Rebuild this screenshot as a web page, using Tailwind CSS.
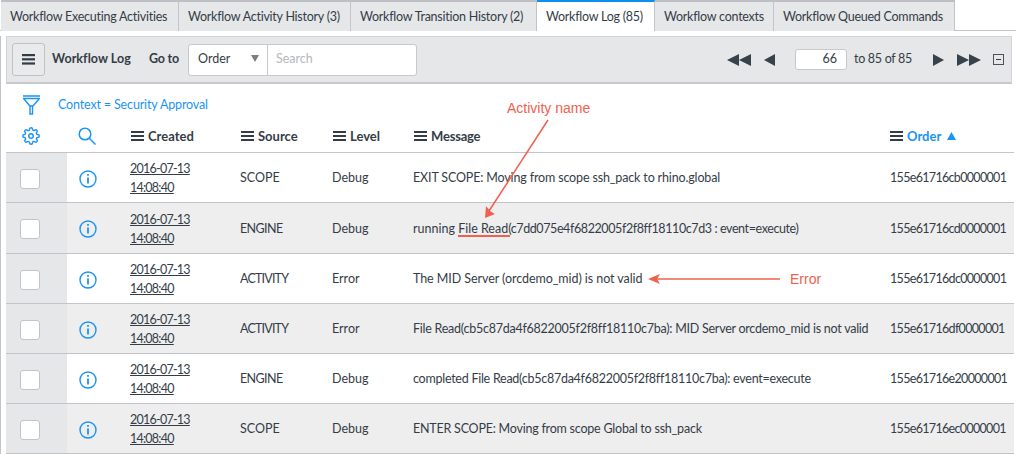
<!DOCTYPE html>
<html lang="en">
<head>
  <meta charset="UTF-8" />
  <title>Workflow Log</title>
  <script src="https://cdn.jsdelivr.net/npm/@tailwindcss/browser@4"></script>
</head>
<body class="bg-white text-[#343d47] font-['Lato',sans-serif] text-[12.5px] w-[1016px] h-[455px] overflow-hidden relative">

  <!-- Tabs -->
  <div class="flex h-[31px] border-b border-[#c2c4c9] pl-px tracking-[-0.25px]">
    <div class="h-[31px] pt-px px-[9px] w-[178px] flex items-center bg-[#e6e7e9] border-t-2 border-t-[#bdbfc4] border-r border-[#c2c4c9] whitespace-nowrap">Workflow Executing Activities</div>
    <div class="h-[31px] pt-px w-[172px] px-[9px] flex items-center bg-[#e6e7e9] border-t-2 border-t-[#bdbfc4] border-r border-[#c2c4c9] whitespace-nowrap">Workflow Activity History (3)</div>
    <div class="h-[31px] pt-px w-[186px] px-[9px] flex items-center bg-[#e6e7e9] border-t-2 border-t-[#bdbfc4] border-r border-[#c2c4c9] whitespace-nowrap">Workflow Transition History (2)</div>
    <div class="h-[31px] pt-px w-[118px] px-[9px] flex items-center bg-white border-t-2 border-t-[#0c8ff0] border-r border-[#c2c4c9] whitespace-nowrap">Workflow Log (85)</div>
    <div class="h-[31px] pt-px w-[119px] px-[9px] flex items-center bg-[#e6e7e9] border-t-2 border-t-[#bdbfc4] border-r border-[#c2c4c9] whitespace-nowrap">Workflow contexts</div>
    <div class="h-[31px] pt-px w-[181px] px-[9px] flex items-center bg-[#e6e7e9] border-t-2 border-t-[#bdbfc4] border-r border-[#c2c4c9] whitespace-nowrap">Workflow Queued Commands</div>
  </div>

  <div class="pl-[6px] pr-[4px] border-l border-[#c2c4c9]">
    <!-- Toolbar -->
    <div class="mt-[5px] h-[48px] -ml-px w-[1006px] flex items-center bg-[#e6e7e9] border border-[#d3d4d8] border-b-2 border-b-[#c8c9cd] pl-[5px] pr-[7px]">
      <button class="w-[33px] h-[33px] flex items-center justify-center bg-[#e9eaec] border border-[#bfc1c5] rounded-[3px]">
        <svg width="13" height="11" viewBox="0 0 13 11" fill="#343d47"><rect width="13" height="2.2"/><rect y="4.2" width="13" height="2.2"/><rect y="8.4" width="13" height="2.2"/></svg>
      </button>
      <span class="ml-[7px] font-bold w-[97px] tracking-[0.05px] whitespace-nowrap">Workflow Log</span>
      <span class="font-bold w-[39px] tracking-[-0.2px]">Go to</span>
      <div class="flex h-[32px] w-[229px] bg-white border border-[#c8c9cd] rounded-[3px]">
        <div class="w-[79px] flex items-center justify-between border-r border-[#c8c9cd] pl-[9px] pr-[8px]">
          <span>Order</span>
          <span class="w-0 h-0 border-x-[4px] border-x-transparent border-t-[7px] border-t-[#7a7f86] mb-[3px]"></span>
        </div>
        <div class="flex items-center pl-[8px] text-[#b4b7bb]">Search</div>
      </div>
      <div class="ml-auto flex items-center">
        <svg width="24" height="12" viewBox="0 0 24 12" fill="#38424d"><path d="M12 0v12L0 6zM24 0v12L12 6z"/></svg>
        <svg class="ml-[13px]" width="11" height="12" viewBox="0 0 11 12" fill="#38424d"><path d="M11 0v12L0 6z"/></svg>
        <div class="ml-[20px] w-[52px] h-[21px] bg-white border border-[#c8c9cd] rounded-[3px] flex items-center justify-end pr-[9px]">66</div>
        <span class="ml-[7px] w-[67px] tracking-[-0.3px] whitespace-nowrap">to 85 of 85</span>
        <svg class="ml-[12px]" width="11" height="12" viewBox="0 0 11 12" fill="#38424d"><path d="M0 0v12l11-6z"/></svg>
        <svg class="ml-[13px]" width="24" height="12" viewBox="0 0 24 12" fill="#38424d"><path d="M0 0v12l12-6zM12 0v12l12-6z"/></svg>
        <span class="ml-[12px] w-[11px] h-[11px] border border-[#4a525b] flex items-center justify-center"><span class="w-[5px] h-px bg-[#343d47]"></span></span>
      </div>
    </div>

    <!-- Filter breadcrumb -->
    <div class="h-[37px] pt-[5px] flex items-center text-[#1a94f5] -ml-px">
      <svg class="ml-[16px]" width="19" height="21" viewBox="0 0 19 21" fill="none" stroke="#1a94f5" stroke-width="1.4"><path d="M1 1h17M1 3.5h17M2 4l6 7h3l6-7M8 11v8h2.5v-8"/></svg>
      <span class="ml-[17px] tracking-[-0.15px]">Context = Security Approval</span>
    </div>

    <!-- Log table -->
    <table class="table-fixed -ml-px w-[1008px] border-collapse">
      <colgroup>
        <col class="w-[61px]" /><col class="w-[63px]" /><col class="w-[110px]" /><col class="w-[92px]" /><col class="w-[81px]" /><col class="w-[477px]" /><col class="w-[124px]" />
      </colgroup>
      <thead>
        <tr class="h-[31px] text-[13px] text-left border-b border-[#c2c4c9]">
          <th>
            <svg class="ml-[16px]" width="18" height="18" viewBox="0 0 24 24" fill="none" stroke="#1a94f5" stroke-width="1.900"><circle cx="12" cy="12" r="3"/><path d="M19.4 15a1.65 1.65 0 0 0 .33 1.82l.06.06a2 2 0 0 1 0 2.83 2 2 0 0 1-2.83 0l-.06-.06a1.65 1.65 0 0 0-1.82-.33 1.65 1.65 0 0 0-1 1.51V21a2 2 0 0 1-2 2 2 2 0 0 1-2-2v-.09A1.65 1.65 0 0 0 9 19.4a1.65 1.65 0 0 0-1.82.33l-.06.06a2 2 0 0 1-2.83 0 2 2 0 0 1 0-2.83l.06-.06a1.65 1.65 0 0 0 .33-1.82 1.65 1.65 0 0 0-1.51-1H3a2 2 0 0 1-2-2 2 2 0 0 1 2-2h.09A1.65 1.65 0 0 0 4.6 9a1.65 1.65 0 0 0-.33-1.82l-.06-.06a2 2 0 0 1 0-2.83 2 2 0 0 1 2.83 0l.06.06a1.65 1.65 0 0 0 1.82.33H9a1.65 1.65 0 0 0 1-1.51V3a2 2 0 0 1 2-2 2 2 0 0 1 2 2v.09a1.65 1.65 0 0 0 1 1.51 1.65 1.65 0 0 0 1.82-.33l.06-.06a2 2 0 0 1 2.83 0 2 2 0 0 1 0 2.83l-.06.06a1.65 1.65 0 0 0-.33 1.82V9a1.65 1.65 0 0 0 1.51 1H21a2 2 0 0 1 2 2 2 2 0 0 1-2 2h-.09a1.65 1.65 0 0 0-1.51 1z"/></svg>
          </th>
          <th>
            <svg class="ml-[11px]" width="18" height="18" viewBox="0 0 18 18" fill="none" stroke="#1a94f5" stroke-width="1.5"><circle cx="7" cy="7" r="5.800"/><path d="M11.300 11.300L17.500 17.500"/></svg>
          </th>
          <th><span class="flex items-center gap-[4px] pl-px font-bold"><svg width="13" height="10" viewBox="0 0 13 10" fill="#343d47"><rect width="13" height="2"/><rect y="4" width="13" height="2"/><rect y="8" width="13" height="2"/></svg>Created</span></th>
          <th><span class="flex items-center gap-[4px] pl-px font-bold"><svg width="13" height="10" viewBox="0 0 13 10" fill="#343d47"><rect width="13" height="2"/><rect y="4" width="13" height="2"/><rect y="8" width="13" height="2"/></svg>Source</span></th>
          <th><span class="flex items-center gap-[4px] pl-px font-bold"><svg width="13" height="10" viewBox="0 0 13 10" fill="#343d47"><rect width="13" height="2"/><rect y="4" width="13" height="2"/><rect y="8" width="13" height="2"/></svg>Level</span></th>
          <th><span class="flex items-center gap-[4px] pl-px font-bold tracking-[-0.2px]"><svg width="13" height="10" viewBox="0 0 13 10" fill="#343d47"><rect width="13" height="2"/><rect y="4" width="13" height="2"/><rect y="8" width="13" height="2"/></svg>Message</span></th>
          <th><span class="flex items-center gap-[4px] font-bold text-[#1a94f5]"><svg width="13" height="10" viewBox="0 0 13 10" fill="#343d47"><rect width="13" height="2"/><rect y="4" width="13" height="2"/><rect y="8" width="13" height="2"/></svg>Order<svg class="ml-[2px]" width="9" height="8" viewBox="0 0 9 8" fill="#1a94f5"><path d="M4.500 0L9 8H0z"/></svg></span></th>
        </tr>
      </thead>
      <tbody class="[&_td]:pt-[3px]">
        <tr class="h-[50px] border-b border-[#c2c4c9] bg-white">
          <td class="bg-[#e6e7e9]"><span class="ml-[14px] block w-[20px] h-[20px] bg-white border border-[#c2c4c9] rounded-[3px]"></span></td>
          <td><svg class="ml-[12px]" width="18" height="18" viewBox="0 0 18 18" fill="none" stroke="#1a94f5" stroke-width="1.400"><circle cx="9" cy="9" r="8"/><path d="M9 7.500v6" stroke-width="1.800"/><path d="M9 4v1.800" stroke-width="1.800"/></svg></td>
          <td class="leading-[19px] !pt-[2px] tracking-[-0.75px]"><span class="underline">2016-07-13<br />14:08:40</span></td>
          <td>SCOPE</td><td>Debug</td>
          <td class="whitespace-nowrap tracking-[-0.15px]">EXIT SCOPE: Moving from scope ssh_pack to rhino.global</td>
          <td class="tracking-[-0.67px]">155e61716cb0000001</td>
        </tr>
        <tr class="h-[51px] border-b border-[#c2c4c9] bg-[#eeeeef]">
          <td class="bg-[#e6e7e9]"><span class="ml-[14px] block w-[20px] h-[20px] bg-white border border-[#c2c4c9] rounded-[3px]"></span></td>
          <td><svg class="ml-[12px]" width="18" height="18" viewBox="0 0 18 18" fill="none" stroke="#1a94f5" stroke-width="1.400"><circle cx="9" cy="9" r="8"/><path d="M9 7.500v6" stroke-width="1.800"/><path d="M9 4v1.800" stroke-width="1.800"/></svg></td>
          <td class="leading-[19px] !pt-[2px] tracking-[-0.75px]"><span class="underline">2016-07-13<br />14:08:40</span></td>
          <td class="tracking-[-0.6px]">ENGINE</td><td>Debug</td>
          <td class="whitespace-nowrap tracking-[-0.4px]"><span class="tracking-[0px]">running File Read</span>(c7dd075e4f6822005f2f8ff18110c7d3 : event=execute)</td>
          <td class="tracking-[-0.67px]">155e61716cd0000001</td>
        </tr>
        <tr class="h-[50px] border-b border-[#c2c4c9] bg-white">
          <td class="bg-[#e6e7e9]"><span class="ml-[14px] block w-[20px] h-[20px] bg-white border border-[#c2c4c9] rounded-[3px]"></span></td>
          <td><svg class="ml-[12px]" width="18" height="18" viewBox="0 0 18 18" fill="none" stroke="#1a94f5" stroke-width="1.400"><circle cx="9" cy="9" r="8"/><path d="M9 7.500v6" stroke-width="1.800"/><path d="M9 4v1.800" stroke-width="1.800"/></svg></td>
          <td class="leading-[19px] !pt-[2px] tracking-[-0.75px]"><span class="underline">2016-07-13<br />14:08:40</span></td>
          <td class="tracking-[-0.8px]">ACTIVITY</td><td>Error</td>
          <td class="whitespace-nowrap tracking-[-0.07px]">The MID Server (orcdemo_mid) is not valid</td>
          <td class="tracking-[-0.67px]">155e61716dc0000001</td>
        </tr>
        <tr class="h-[50px] border-b border-[#c2c4c9] bg-[#eeeeef]">
          <td class="bg-[#e6e7e9]"><span class="ml-[14px] block w-[20px] h-[20px] bg-white border border-[#c2c4c9] rounded-[3px]"></span></td>
          <td><svg class="ml-[12px]" width="18" height="18" viewBox="0 0 18 18" fill="none" stroke="#1a94f5" stroke-width="1.400"><circle cx="9" cy="9" r="8"/><path d="M9 7.500v6" stroke-width="1.800"/><path d="M9 4v1.800" stroke-width="1.800"/></svg></td>
          <td class="leading-[19px] !pt-[2px] tracking-[-0.75px]"><span class="underline">2016-07-13<br />14:08:40</span></td>
          <td class="tracking-[-0.8px]">ACTIVITY</td><td>Error</td>
          <td class="whitespace-nowrap tracking-[-0.25px]">File Read(cb5c87da4f6822005f2f8ff18110c7ba): MID Server orcdemo_mid is not valid</td>
          <td class="tracking-[-0.67px]">155e61716df0000001</td>
        </tr>
        <tr class="h-[50px] border-b border-[#c2c4c9] bg-white">
          <td class="bg-[#e6e7e9]"><span class="ml-[14px] block w-[20px] h-[20px] bg-white border border-[#c2c4c9] rounded-[3px]"></span></td>
          <td><svg class="ml-[12px]" width="18" height="18" viewBox="0 0 18 18" fill="none" stroke="#1a94f5" stroke-width="1.400"><circle cx="9" cy="9" r="8"/><path d="M9 7.500v6" stroke-width="1.800"/><path d="M9 4v1.800" stroke-width="1.800"/></svg></td>
          <td class="leading-[19px] !pt-[2px] tracking-[-0.75px]"><span class="underline">2016-07-13<br />14:08:40</span></td>
          <td class="tracking-[-0.6px]">ENGINE</td><td>Debug</td>
          <td class="whitespace-nowrap tracking-[-0.26px]">completed File Read(cb5c87da4f6822005f2f8ff18110c7ba): event=execute</td>
          <td class="tracking-[-0.67px]">155e61716e20000001</td>
        </tr>
        <tr class="h-[50px] border-b border-[#c2c4c9] bg-[#eeeeef]">
          <td class="bg-[#e6e7e9]"><span class="ml-[14px] block w-[20px] h-[20px] bg-white border border-[#c2c4c9] rounded-[3px]"></span></td>
          <td><svg class="ml-[12px]" width="18" height="18" viewBox="0 0 18 18" fill="none" stroke="#1a94f5" stroke-width="1.400"><circle cx="9" cy="9" r="8"/><path d="M9 7.500v6" stroke-width="1.800"/><path d="M9 4v1.800" stroke-width="1.800"/></svg></td>
          <td class="leading-[19px] !pt-[2px] tracking-[-0.75px]"><span class="underline">2016-07-13<br />14:08:40</span></td>
          <td>SCOPE</td><td>Debug</td>
          <td class="whitespace-nowrap tracking-[-0.22px]">ENTER SCOPE: Moving from scope Global to ssh_pack</td>
          <td class="tracking-[-0.67px]">155e61716ec0000001</td>
        </tr>
      </tbody>
    </table>
  </div>

  <!-- Red annotations drawn over the table -->
  <svg class="absolute left-0 top-0 pointer-events-none" width="1016" height="455" fill="none" stroke="#f0604f" stroke-width="1.500">
    <path d="M548 120L489 211"/>
    <path d="M485 218L495 214 490 211 486 206z" fill="#f0604f" stroke="none"/>
    <path d="M458 236H510" stroke-width="2"/>
    <path d="M652 279H780"/>
    <path d="M648 279L660 274 657 279 660 284z" fill="#f0604f" stroke="none"/>
  </svg>
  <span class="absolute left-[507px] top-[98px] text-[#f0604f] text-[14px] font-['Liberation_Sans',sans-serif]">Activity name</span>
  <span class="absolute left-[790px] top-[269px] text-[#f0604f] text-[14px] font-['Liberation_Sans',sans-serif]">Error</span>
</body>
</html>
